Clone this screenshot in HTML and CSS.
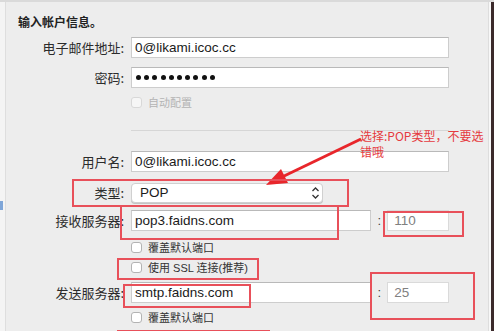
FILE: index.html
```html
<!DOCTYPE html>
<html>
	<head>
		<meta charset="utf-8">
		<link rel="stylesheet" href="styles.css">
	</head>
	<body>
		<div class="screen">
			<div class="side"><span class="blip"></span></div>
			<div class="sheet">
				<h1 class="title">输入帐户信息。</h1>

				<div class="row email">
					<span class="lbl">电子邮件地址:</span>
					<div class="input full">0@likami.icoc.cc</div>
				</div>
				<div class="row pass">
					<span class="lbl">密码:</span>
					<div class="input full dots">
						<i></i><i></i><i></i><i></i><i></i><i></i><i></i><i></i><i></i><i></i>
					</div>
				</div>
				<div class="row check auto">
					<span class="lbl"></span>
					<div class="opt disabled"><span class="box"></span>自动配置</div>
				</div>
				<div class="row sep">
					<span class="lbl"></span>
					<div class="line"></div>
				</div>

				<div class="row user">
					<span class="lbl">用户名:</span>
					<div class="input full">0@likami.icoc.cc</div>
				</div>
				<div class="row kind">
					<span class="lbl">类型:</span>
					<div class="select">
						<span>POP</span>
						<svg class="updown" width="9" height="14" viewBox="0 0 9 14">
							<path d="M1.5 5 L4.5 2 L7.5 5" fill="none" stroke="#333" stroke-width="1.3"/>
							<path d="M1.5 9 L4.5 12 L7.5 9" fill="none" stroke="#333" stroke-width="1.3"/>
						</svg>
					</div>
				</div>
				<div class="row incoming">
					<span class="lbl">接收服务器:</span>
					<div class="server">
						<div class="input host">pop3.faidns.com</div>
						<span class="colon">:</span>
						<div class="input port">110</div>
					</div>
				</div>
				<div class="row check over1">
					<span class="lbl"></span>
					<div class="opt"><span class="box"></span>覆盖默认端口</div>
				</div>
				<div class="row check ssl">
					<span class="lbl"></span>
					<div class="opt"><span class="box"></span>使用 SSL 连接(推荐)</div>
				</div>
				<div class="row outgoing">
					<span class="lbl">发送服务器:</span>
					<div class="server">
						<div class="input host">smtp.faidns.com</div>
						<span class="colon">:</span>
						<div class="input port">25</div>
					</div>
				</div>
				<div class="row check over2">
					<span class="lbl"></span>
					<div class="opt"><span class="box"></span>覆盖默认端口</div>
				</div>
			</div>
			<div class="edge"></div>

			<!-- annotations drawn over the dialog -->
			<div class="note">选择:POP类型，不要选<br>错哦</div>
			<svg class="arrow" width="494" height="331" viewBox="0 0 494 331">
				<line x1="361" y1="137" x2="282" y2="175" stroke="#e8262b" stroke-width="3"/>
				<polygon points="266,183 288,181 281,167" fill="#e8262b"/>
			</svg>
			<div class="mark m-kind"></div>
			<div class="mark m-in"></div>
			<div class="mark m-inport"></div>
			<div class="mark m-ssl"></div>
			<div class="mark m-out"></div>
			<div class="mark m-outport"></div>
			<div class="mark m-last"></div>
		</div>
	</body>
</html>
```

FILE: styles.css
```css
html, body {
	margin: 0;
	height: 100%;
}
body {
	background: #ececec;
	font-family: "Liberation Sans", "Noto Sans CJK SC", sans-serif;
	color: #2b2b2b;
}
.screen {
	position: relative;
	width: 494px;
	height: 331px;
	display: flex;
	overflow: hidden;
	background: #ededed;
	border-top: 2px solid #dadada;
	box-sizing: border-box;
}
.side {
	width: 5px;
	flex: none;
	background: #f4f4f4;
	border-right: 1px solid #dedede;
	display: flex;
	flex-direction: column;
}
.blip {
	margin-top: 199px;
	width: 3px;
	height: 9px;
	background: #7fa6d8;
}
.edge {
	width: 2px;
	flex: none;
	background: #f7f7f7;
	border-left: 1px solid #dddddd;
	border-right: 3px solid #3b2a2b;
}
.sheet {
	flex: 1;
	display: flex;
	flex-direction: column;
}
.title {
	margin: 0;
	padding: 12px 0 0 12px;
	font-size: 12px;
	line-height: 16px;
	font-weight: bold;
	font-family: "Noto Sans CJK SC", sans-serif;
	color: #222;
}
.row {
	display: grid;
	grid-template-columns: 118px 318px;
	column-gap: 7px;
	height: 21px;
	align-items: center;
}
.lbl {
	text-align: right;
	font-size: 13px;
	font-family: "Noto Sans CJK SC", sans-serif;
	color: #2b2b2b;
	line-height: 21px;
	white-space: nowrap;
}
.input {
	height: 21px;
	box-sizing: border-box;
	background: #fff;
	border: 1px solid #cdcdcd;
	border-top-color: #b9b9b9;
	padding-left: 3px;
	font-size: 13.5px;
	line-height: 19px;
	color: #1a1a1a;
	white-space: nowrap;
	overflow: hidden;
}
.dots {
	display: flex;
	align-items: center;
	gap: 3.2px;
	padding-left: 4px;
}
.dots i {
	width: 5px;
	height: 5px;
	border-radius: 50%;
	background: #111;
}
.email { margin-top: 7px; }
.pass { margin-top: 9px; }
.auto { margin-top: 4px; height: 20px; }
.sep { margin-top: 18px; height: 1px; }
.line {
	height: 1px;
	background: #d6d6d6;
}
.user { margin-top: 20px; }
.kind { margin-top: 10px; height: 20px; }
.incoming { margin-top: 8px; }
.over1 { margin-top: 6px; height: 20px; }
.ssl { height: 20px; }
.outgoing { margin-top: 5px; }
.over2 { margin-top: 4px; height: 20px; }

.opt {
	display: flex;
	align-items: center;
	gap: 6px;
	font-size: 11px;
	font-family: "Liberation Sans", "Noto Sans CJK SC", sans-serif;
	color: #333;
}
.box {
	width: 11px;
	height: 11px;
	box-sizing: border-box;
	border: 1px solid #b3b3b3;
	border-radius: 3px;
	background: #fff;
}
.disabled {
	color: #b4b4b4;
}
.disabled .box {
	border-color: #d8d8d8;
	background: #f6f6f6;
}
.select {
	width: 192px;
	height: 20px;
	box-sizing: border-box;
	background: #fff;
	border: 1px solid #d0d0d0;
	border-radius: 4px;
	box-shadow: 0 1px 0 #c4c4c4;
	display: flex;
	align-items: center;
	justify-content: space-between;
	padding: 0 2px 0 8px;
	font-size: 13.5px;
	color: #1a1a1a;
}
.server {
	display: flex;
	align-items: center;
}
.host {
	width: 241px;
}
.colon {
	width: 16px;
	text-align: center;
	font-size: 13px;
	color: #444;
}
.port {
	width: 62px;
	color: #808080;
	padding-left: 6px;
	border-color: #dadada;
}

.note {
	position: absolute;
	left: 360px;
	top: 126px;
	font-size: 12px;
	line-height: 16px;
	font-family: "Noto Sans CJK SC", sans-serif;
	color: #e53b40;
}
.arrow {
	position: absolute;
	left: 0;
	top: 0;
}
.mark {
	position: absolute;
	box-sizing: border-box;
	border: 2px solid #e8505a;
}
.m-kind { left: 72px; top: 177px; width: 277px; height: 28px; }
.m-in { left: 120px; top: 205px; width: 219px; height: 33px; border-top: none; }
.m-inport { left: 383px; top: 209px; width: 81px; height: 26px; }
.m-ssl { left: 117px; top: 256px; width: 142px; height: 22px; }
.m-out { left: 123px; top: 282px; width: 128px; height: 24px; }
.m-outport { left: 370px; top: 270px; width: 105px; height: 48px; }
.m-last { left: 117px; top: 328px; width: 153px; height: 10px; }
```
